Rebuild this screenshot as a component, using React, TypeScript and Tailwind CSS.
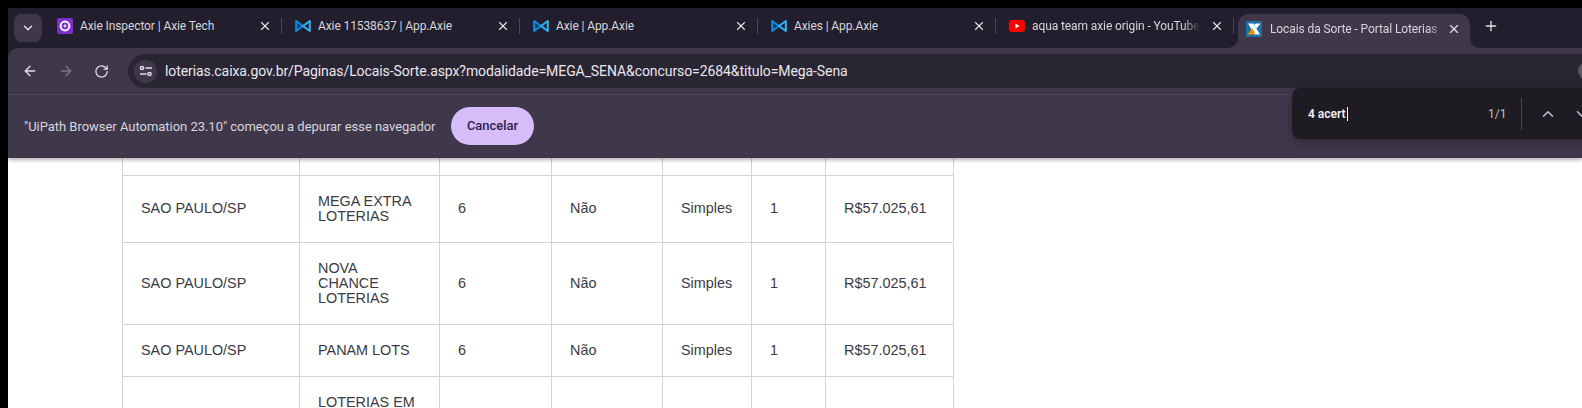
import { ArrowLeft, ArrowRight, ChevronDown, ChevronUp, Plus, RotateCw, X } from "lucide-react";

const uiFont = "font-['Roboto','Noto_Sans',sans-serif]";

function AxieInspectorIcon() {
  return (
    <svg width="16" height="16" viewBox="0 0 16 16" className="shrink-0">
      <rect width="16" height="16" rx="2" fill="#7b2fd0" />
      <circle cx="8" cy="8" r="4.4" fill="none" stroke="#fff" strokeWidth="2" />
      <circle cx="8" cy="8" r="1.4" fill="#e6d8fa" />
    </svg>
  );
}

function AxieIcon() {
  return (
    <svg width="16" height="16" viewBox="0 0 16 16" className="shrink-0">
      <path d="M1.2 3 L8 8 L1.2 13 Z" fill="#123a66" stroke="#0f8be0" strokeWidth="2" strokeLinejoin="round" />
      <path d="M14.8 3 L8 8 L14.8 13 Z" fill="none" stroke="#29b6f6" strokeWidth="2" strokeLinejoin="round" />
    </svg>
  );
}

function YoutubeIcon() {
  return (
    <svg width="16" height="16" viewBox="0 0 16 16" className="shrink-0">
      <rect x="0" y="2" width="16" height="12" rx="3" fill="#f00" />
      <path d="M6.5 5.6 L10.6 8 L6.5 10.4 Z" fill="#fff" />
    </svg>
  );
}

function CaixaIcon() {
  return (
    <svg width="16" height="16" viewBox="0 0 16 16" className="shrink-0">
      <rect width="16" height="16" fill="#1f6fa8" />
      <path d="M2 2.5 H7.5 L14 13.5 H8.5 Z" fill="#fff" />
      <path d="M9.5 2.5 H14.5 L10.6 7.4 L8.4 4 Z" fill="#fff" />
      <path d="M1.5 13.5 L6.5 7.6 L9 11.4 L7.2 13.5 Z" fill="#f39200" />
    </svg>
  );
}

function SiteInfoIcon() {
  return (
    <svg width="16" height="16" viewBox="0 0 16 16" fill="none" stroke="#e3e0e8" strokeWidth="1.5">
      <circle cx="4" cy="5" r="1.6" />
      <path d="M7.5 5 H14" />
      <path d="M2 11 H8.5" />
      <circle cx="11.5" cy="11" r="1.6" />
    </svg>
  );
}

const tabs = [
  { title: "Axie Inspector | Axie Tech", icon: <AxieInspectorIcon /> },
  { title: "Axie 11538637 | App.Axie", icon: <AxieIcon /> },
  { title: "Axie | App.Axie", icon: <AxieIcon /> },
  { title: "Axies | App.Axie", icon: <AxieIcon /> },
  { title: "aqua team axie origin - YouTube", icon: <YoutubeIcon />, fade: true },
];

const rows = [
  { lines: ["MEGA EXTRA", "LOTERIAS"] },
  { lines: ["NOVA", "CHANCE", "LOTERIAS"] },
  { lines: ["PANAM LOTS"] },
];

const cell = "border border-[#d3d3dc] p-[18px] align-middle";

export default function App() {
  return (
    <div className="relative flex h-[408px] w-[1582px] flex-col overflow-hidden bg-black pl-2 pt-2">
      {/* tab strip */}
      <div className={`bg-[#231e2d] ${uiFont} text-[12px] tracking-[-0.1px] text-[#d8d5dd]`}>
        <div className="flex h-10 items-start">
          <div className="ml-[6px] mt-[6px] flex h-7 w-7 items-center justify-center rounded-lg bg-[#3f384b]">
            <ChevronDown size={14} strokeWidth={2.5} className="text-[#e3e0e8]" />
          </div>
          <div className="ml-[2px] flex h-10">
            {tabs.map((tab) => (
              <div key={tab.title} className="flex h-10 w-[238px] items-center pb-[4px] pl-[13px]">
                {tab.icon}
                <span
                  className={`ml-[7px] flex-1 overflow-hidden whitespace-nowrap ${
                    tab.fade ? "mr-[8px] [mask-image:linear-gradient(to_right,black_90%,transparent)]" : ""
                  }`}
                >
                  {tab.title}
                </span>
                <X size={14} strokeWidth={2} className="ml-[2px] shrink-0 text-[#e3e0e8]" />
                <div className="ml-[9px] h-4 w-px shrink-0 bg-[#4a4454]" />
              </div>
            ))}
            <div className="relative ml-[4px] mt-[6px] flex h-[40px] w-[232px] items-center rounded-t-[10px] bg-[#3f384b] pb-[10px] pl-[8px] pr-[9px]">
              <span className="absolute -left-[10px] bottom-[6px] h-[10px] w-[10px] bg-[#3f384b]">
                <span className="block h-full w-full rounded-br-[10px] bg-[#231e2d]" />
              </span>
              <span className="absolute -right-[10px] bottom-[6px] h-[10px] w-[10px] bg-[#3f384b]">
                <span className="block h-full w-full rounded-bl-[10px] bg-[#231e2d]" />
              </span>
              <CaixaIcon />
              <span className="ml-[8px] flex-1 overflow-hidden whitespace-nowrap [mask-image:linear-gradient(to_right,black_90%,transparent)]">
                Locais da Sorte - Portal Loterias
              </span>
              <X size={14} strokeWidth={2} className="ml-[2px] shrink-0 text-[#e3e0e8]" />
            </div>
            <div className="ml-[13px] flex h-9 items-center">
              <Plus size={16} strokeWidth={2} className="text-[#e3e0e8]" />
            </div>
          </div>
        </div>

        {/* toolbar */}
        <div className="flex h-[46px] items-start rounded-tl-[10px] bg-[#3f384b] pt-[6px]">
          <div className="flex h-[34px] w-[120px] items-center pl-[14px]">
            <ArrowLeft size={16} strokeWidth={2} className="text-[#e3e0e8]" />
            <ArrowRight size={16} strokeWidth={2} className="ml-[20px] text-[#7d7787]" />
            <RotateCw size={15} strokeWidth={2} className="ml-[20px] text-[#e3e0e8]" />
          </div>
          <div className="flex h-[34px] flex-1 items-center rounded-l-[17px] bg-[#2a2533] pl-[6px]">
            <div className="flex h-[23px] w-[23px] items-center justify-center rounded-full bg-[#3f384b]">
              <SiteInfoIcon />
            </div>
            <span className="ml-[8px] whitespace-nowrap text-[14px] tracking-[-0.08px] text-[#e9e7ed]">
              loterias.caixa.gov.br/Paginas/Locais-Sorte.aspx?modalidade=MEGA_SENA&amp;concurso=2684&amp;titulo=Mega-Sena
            </span>
          </div>
        </div>
      </div>

      {/* debugging infobar */}
      <div
        className={`relative z-10 flex h-[64px] items-center border-t border-[#4c4659] bg-[#3f384b] pl-[16px] shadow-[0_2px_4px_rgba(0,0,0,0.3)] ${uiFont} text-[13px] tracking-[-0.03px] text-[#d8d5dd]`}
      >
        <span className="w-[427px] whitespace-nowrap">
          "UiPath Browser Automation 23.10" começou a depurar esse navegador
        </span>
        <button className="mb-[2px] flex h-[38px] w-[83px] items-center justify-center rounded-full bg-[#d8bdfb] text-[13px] font-medium text-[#2c1f4a]">
          Cancelar
        </button>
      </div>

      {/* find in page */}
      <div
        className={`absolute left-[1292px] top-[88px] z-20 flex h-[51px] w-[310px] items-center rounded-l-[8px] bg-[#1e1c22] pl-[16px] shadow-[0_4px_10px_rgba(0,0,0,0.25)] ${uiFont}`}
      >
        <span className="w-[180px] text-[12px] font-semibold text-[#f0eef3]">
          <span className="border-r border-white pr-px">4 acert</span>
        </span>
        <span className="w-[33px] text-[12px] text-[#c4c1ca]">1/1</span>
        <div className="h-8 w-px bg-[#4a4853]" />
        <ChevronUp size={18} strokeWidth={2} className="ml-[17px] text-[#c4c1ca]" />
        <ChevronDown size={18} strokeWidth={2} className="ml-[16px] text-[#c4c1ca]" />
      </div>

      <div className="absolute left-[1578px] top-[62px] h-[18px] w-[18px] rounded-full bg-[#5a5565]" />

      {/* page */}
      <div className="flex-1 overflow-hidden bg-white pl-[114px]">
        <table className="w-[831px] table-fixed border-collapse font-['Liberation_Sans',Arial,sans-serif] text-[14.4px] leading-[15px] text-[#3a3a44]">
          <colgroup>
            <col className="w-[177px]" />
            <col className="w-[140px]" />
            <col className="w-[112px]" />
            <col className="w-[111px]" />
            <col className="w-[89px]" />
            <col className="w-[74px]" />
            <col className="w-[128px]" />
          </colgroup>
          <tbody>
            <tr className="h-[17px]">
              {[0, 1, 2, 3, 4, 5, 6].map((i) => (
                <td key={i} className="border border-t-0 border-[#d3d3dc] p-0" />
              ))}
            </tr>
            {rows.map((row) => (
              <tr key={row.lines[0]}>
                <td className={cell}>SAO PAULO/SP</td>
                <td className={cell}>
                  {row.lines.map((line) => (
                    <div key={line}>{line}</div>
                  ))}
                </td>
                <td className={cell}>6</td>
                <td className={cell}>Não</td>
                <td className={cell}>Simples</td>
                <td className={cell}>1</td>
                <td className={cell}>R$57.025,61</td>
              </tr>
            ))}
            <tr>
              <td className={cell} />
              <td className={`${cell} align-top`}>LOTERIAS EM</td>
              <td className={cell} />
              <td className={cell} />
              <td className={cell} />
              <td className={cell} />
              <td className={cell} />
            </tr>
          </tbody>
        </table>
      </div>
    </div>
  );
}
